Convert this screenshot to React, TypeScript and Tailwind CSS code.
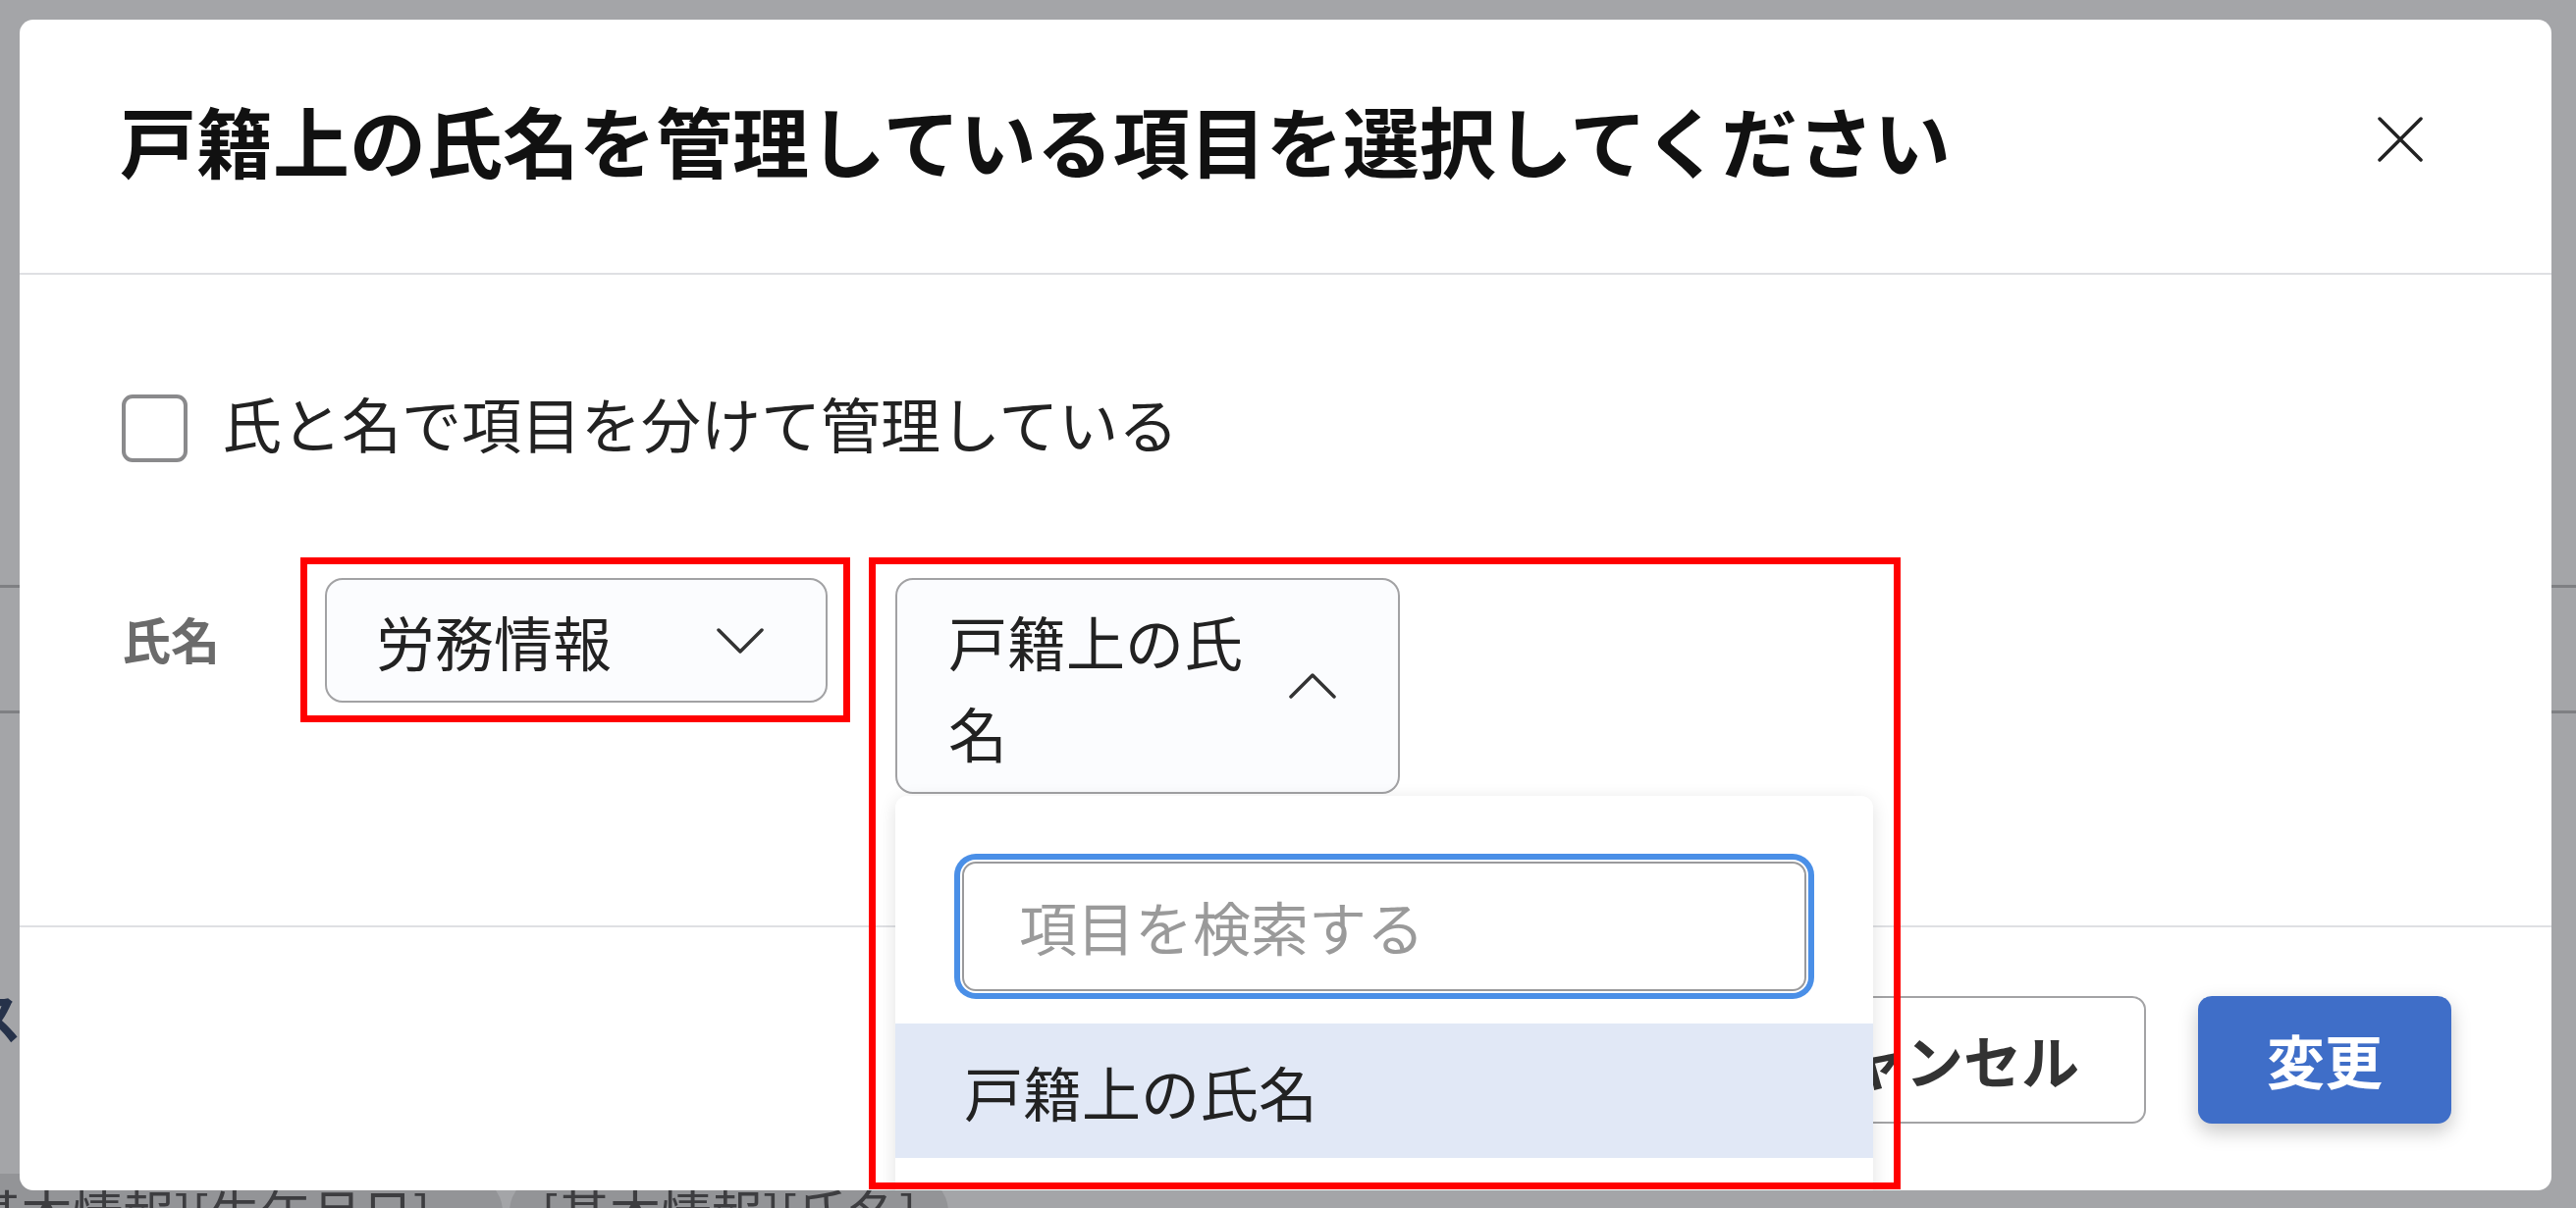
import React from "react";

const jp = "font-['Noto_Sans_CJK_JP','Noto_Sans',sans-serif]";

function Chevron({ up }: { up?: boolean }) {
  return (
    <svg width="48" height="26" viewBox="0 0 48 26" fill="none" className="shrink-0">
      <path
        d={up ? "M2 24L24 2L46 24" : "M2 2L24 24L46 2"}
        stroke="#333"
        strokeWidth="3.5"
        strokeLinecap="round"
        strokeLinejoin="round"
      />
    </svg>
  );
}

function CloseIcon() {
  return (
    <svg width="46" height="46" viewBox="0 0 46 46" fill="none">
      <path d="M2 2L44 44M44 2L2 44" stroke="#222" strokeWidth="3.5" strokeLinecap="round" />
    </svg>
  );
}

export default function App() {
  return (
    <div className={`relative w-[2624px] h-[1231px] overflow-hidden bg-[#a4a5a8] ${jp}`}>
      {/* page behind the overlay */}
      <div className="flex flex-col h-full">
        <div className="h-[596px] shrink-0" />
        <div className="h-[131px] shrink-0 border-y-[3px] border-[#7f8083]" />
        <div className="h-[273px] shrink-0" />
        <div className="-ml-[34px] text-[56px] leading-[70px] font-bold text-[#26324a]">ス</div>
        <div className="h-[126px] shrink-0" />
        <div className="flex gap-[7px] -ml-[80px]">
          <div className="rounded-full bg-[#939497] pl-[32px] pr-[74px] text-[52px] leading-[78px] text-[#3d3d40] whitespace-nowrap">
            [基本情報][生年月日]
          </div>
          <div className="rounded-full bg-[#939497] px-[32px] text-[52px] leading-[78px] text-[#3d3d40] whitespace-nowrap">
            [基本情報][氏名]
          </div>
        </div>
      </div>

      {/* modal */}
      <div className="absolute left-[20px] top-[20px] w-[2579px] h-[1193px] bg-white rounded-[14px] overflow-hidden flex flex-col">
        <header className="h-[260px] shrink-0 flex items-center justify-between pl-[102px] pr-[131px] pb-[14px] border-b-2 border-[#dfe0e3]">
          <h1 className="text-[78px] font-bold text-[#111] leading-none">
            戸籍上の氏名を管理している項目を選択してください
          </h1>
          <button className="w-[46px] h-[46px] flex items-center justify-center">
            <CloseIcon />
          </button>
        </header>

        <div className="h-[663px] shrink-0 pl-[104px] pt-[116px]">
          <label className="flex items-center gap-[35px]">
            <span className="w-[67px] h-[69px] border-[4px] border-[#8a8a8c] rounded-[11px] bg-white" />
            <span className="text-[61px] leading-[69px] text-[#222] pb-[12px]">氏と名で項目を分けて管理している</span>
          </label>

          <div className="mt-[112px] flex items-start">
            <div className="w-[207px] pt-[15px] text-[50px] leading-[93px] font-bold text-[#6b6b6b]">氏名</div>

            <div className="relative w-[512px]">
              <button className="w-full flex items-center justify-between gap-4 border-2 border-[#a2a2a4] rounded-[18px] bg-[#fbfcfe] pl-[50px] pr-[63px] py-[15px] text-[60px] leading-[93px] text-[#222] text-left">
                <span>労務情報</span>
                <Chevron />
              </button>
              <div className="absolute -left-[25px] -right-[23px] -top-[21px] -bottom-[20px] border-[7px] border-[#ff0000] pointer-events-none" />
            </div>

            <div className="relative ml-[69px] w-[514px]">
              <button className="w-full flex items-center justify-between gap-4 border-2 border-[#a2a2a4] rounded-[18px] bg-[#fbfcfe] pl-[52px] pr-[63px] py-[15px] text-[60px] leading-[93px] text-[#222] text-left">
                <span>戸籍上の氏名</span>
                <Chevron up />
              </button>

              <div className="absolute left-0 top-[calc(100%+2px)] w-[996px] h-[430px] bg-white rounded-[12px] shadow-[0_4px_18px_rgba(0,0,0,0.12)] z-10 pt-[67px]">
                <div className="mx-[68px] h-[132px] border-2 border-[#9a9a9c] rounded-[14px] bg-white shadow-[0_0_0_2px_#ffffff,0_0_0_8px_#4a8fe7] flex items-center pl-[56px] text-[59px] text-[#9a9a9a]">
                  項目を検索する
                </div>
                <div className="mt-[33px] h-[137px] bg-[#e1e8f6] flex items-center pl-[70px] text-[60px] text-[#222]">
                  戸籍上の氏名
                </div>
              </div>

              <div className="absolute -left-[27px] -top-[21px] w-[1051px] h-[644px] border-[7px] border-[#ff0000] pointer-events-none z-20" />
            </div>
          </div>
        </div>

        <footer className="flex-1 border-t-2 border-[#dfe0e3] flex justify-end items-start gap-[53px] pt-[70px] pr-[102px]">
          <button className="h-[130px] px-[66px] border-2 border-[#a3a3a5] rounded-[14px] bg-white text-[59px] font-bold text-[#333]">
            キャンセル
          </button>
          <button className="h-[130px] w-[258px] rounded-[14px] bg-[#3f6ec8] text-[59px] font-bold text-white shadow-[0_8px_20px_rgba(0,0,0,0.22)]">
            変更
          </button>
        </footer>
      </div>
    </div>
  );
}
